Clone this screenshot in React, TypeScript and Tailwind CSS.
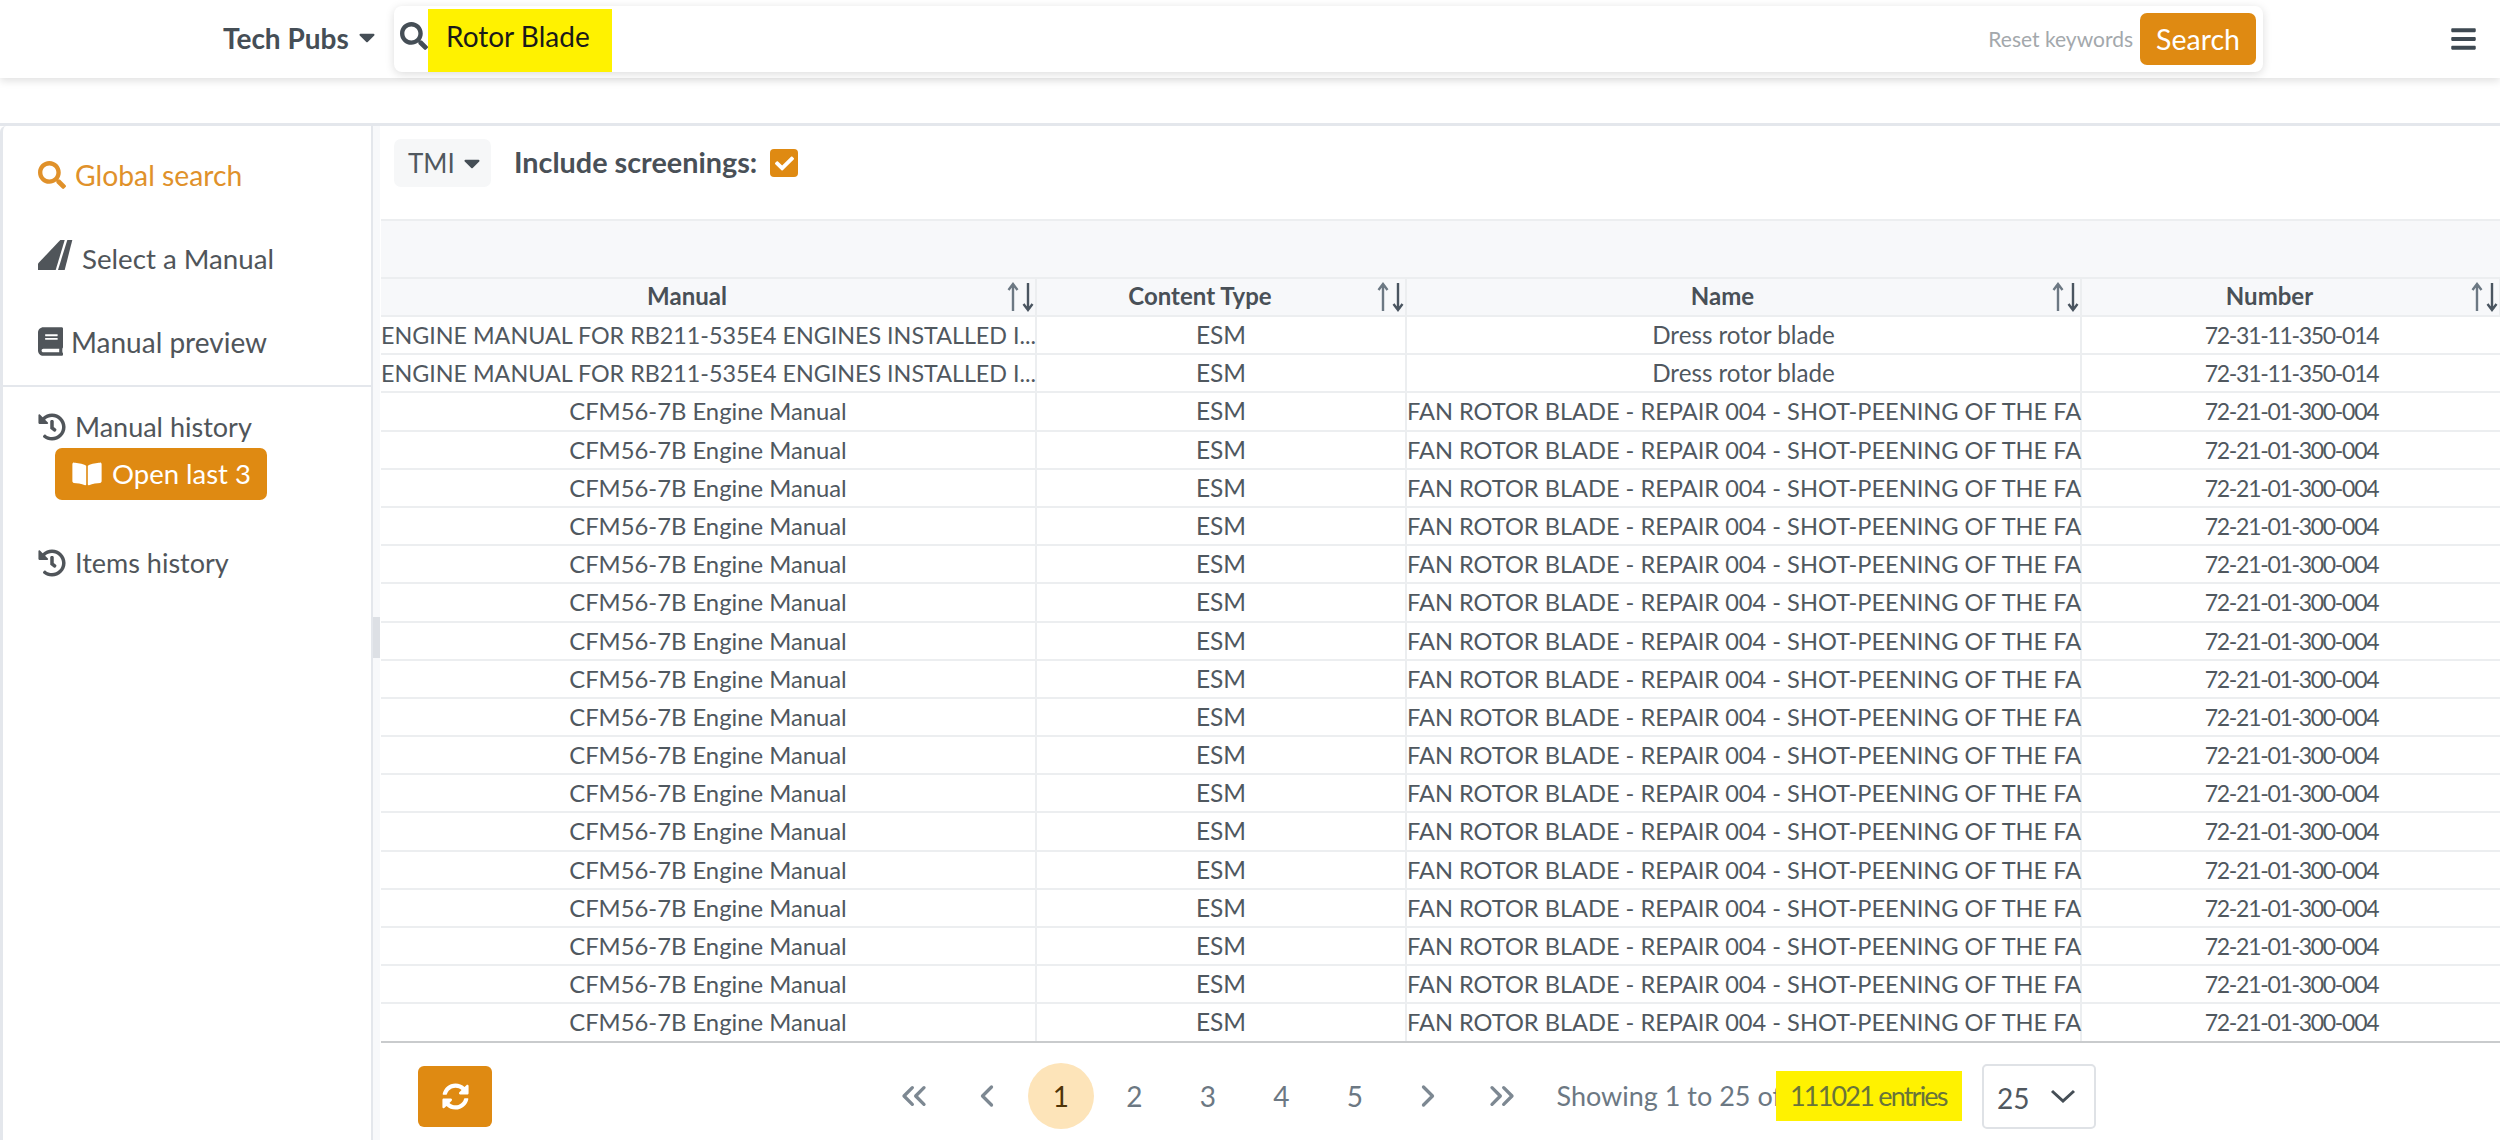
import { FaBars, FaBook, FaBookOpen, FaCaretDown, FaCheck, FaHistory, FaSearch, FaSyncAlt } from 'react-icons/fa';
import { LuChevronLeft, LuChevronRight, LuChevronsLeft, LuChevronsRight } from 'react-icons/lu';

const rows = [
    { manual: 'ENGINE MANUAL FOR RB211-535E4 ENGINES INSTALLED I...', name: 'Dress rotor blade', number: '72-31-11-350-014' },
    { manual: 'ENGINE MANUAL FOR RB211-535E4 ENGINES INSTALLED I...', name: 'Dress rotor blade', number: '72-31-11-350-014' },
    ...Array.from({ length: 17 }, () => ({
        manual: 'CFM56-7B Engine Manual',
        name: 'FAN ROTOR BLADE - REPAIR 004 - SHOT-PEENING OF THE FA',
        number: '72-21-01-300-004',
    })),
];

function SortIcon() {
    return (
        <svg viewBox="0 0 28 30" className="w-[28px] h-[30px]" fill="none" strokeWidth="2.4">
            <path d="M6 29V3M1.500 8 6 2l4.500 6" stroke="#6c7883" />
            <path d="M21 1v26M16.500 22 21 28l4.500-6" stroke="#4a5560" />
        </svg>
    );
}

function HeaderCell({ label, className }: { label: string; className: string }) {
    return (
        <div className={`flex items-center justify-end border-r-2 border-[#eceef0] ${className}`}>
            <span className="flex-1 mt-[-2px] text-center font-bold text-[24px] text-[#495057]">{label}</span>
            <span className="w-[42px] flex justify-end"><SortIcon /></span>
        </div>
    );
}

function SideItem({ icon, label, className }: { icon: React.ReactNode; label: string; className: string }) {
    return (
        <div className={`flex items-center h-[84px] pl-[35px] ${className}`}>
            {icon}
            <span>{label}</span>
        </div>
    );
}

function PageLink({ children, active }: { children: React.ReactNode; active?: boolean }) {
    return (
        <span className="w-[73.500px] flex justify-center items-center text-[28px] text-[#6c7883]">
            {active
                ? <span className="w-[66px] h-[66px] rounded-full bg-[#fde4b9] text-[#4f3408] flex items-center justify-center">{children}</span>
                : children}
        </span>
    );
}

function App() {
    return (
        <div className="w-[2500px] h-[1140px] overflow-hidden bg-white font-['Lato','Liberation_Sans',sans-serif] flex flex-col">
            {/* Top bar */}
            <header className="h-[78px] shrink-0 flex items-center pl-[223px] shadow-[0_3px_8px_rgba(0,0,0,0.12)] relative z-10">
                <div className="flex items-center w-[171px] mt-[-2px] text-[28px] font-bold text-[#454e56]">
                    Tech Pubs
                    <FaCaretDown className="ml-[6px] mt-[-3px] w-[24px] h-[26px]" />
                </div>
                <div className="w-[1869px] h-[66px] flex items-center rounded-[8px] bg-white shadow-[0_2px_10px_rgba(0,0,0,0.14)]">
                    <FaSearch className="ml-[6px] w-[28px] h-[28px] mt-[-6px] text-[#454e56]" />
                    <div className="self-end h-[63px] w-[184px] bg-[#fff200] pl-[18px] pb-[9px] flex items-center text-[28px] text-[#1a1a1a]">Rotor Blade</div>
                    <span className="ml-auto text-[21px] text-[#a3a8ac]">Reset keywords</span>
                    <button className="ml-[7px] mr-[7px] w-[116px] h-[52px] rounded-[7px] bg-[#df8a12] text-white text-[28.500px]">Search</button>
                </div>
                <FaBars className="ml-[188px] w-[25px] h-[28px] text-[#3e4952]" />
            </header>

            <div className="h-[45px] shrink-0" />

            <div className="flex-1 min-h-0 flex border-t-[3px] border-[#e4e7ec]">
                {/* Sidebar */}
                <aside className="w-[373px] shrink-0 border-l-[3px] border-r-2 border-[#e4e7ec] rounded-tl-[6px] pt-[7px]">
                    <SideItem
                        icon={<FaSearch className="w-[28px] h-[28px] mr-[9px]" />}
                        label="Global search"
                        className="text-[28.300px] text-[#e0912a]"
                    />
                    <SideItem
                        icon={
                            <svg viewBox="0 0 35 28" preserveAspectRatio="none" className="w-[35px] h-[30px] mr-[9px] mt-[-8px]" fill="#50555a">
                                <polygon points="0,28 17.700,28 26.700,0 22.300,0 0,22" />
                                <polygon points="20,28 26.700,28 34.300,0 29.300,0" />
                            </svg>
                        }
                        label="Select a Manual"
                        className="text-[27.700px] text-[#50555a]"
                    />
                    <SideItem
                        icon={<FaBook className="w-[25px] h-[29px] mr-[8px]" />}
                        label="Manual preview"
                        className="pb-[3px] text-[28px] text-[#50555a]"
                    />
                    <div className="h-[2px] bg-[#e4e7ec]" />
                    <div className="pl-[35px] pt-[24px] text-[27px] text-[#50555a]">
                        <div className="flex items-center h-[32px]">
                            <FaHistory className="w-[28px] h-[28px] mr-[9px]" />
                            Manual history
                        </div>
                        <button className="mt-[5px] ml-[17px] w-[212px] h-[52px] flex items-center justify-center rounded-[7px] bg-[#df8a12] text-white text-[27.500px]">
                            <FaBookOpen className="w-[32px] h-[26px] mr-[9px]" />
                            Open last 3
                        </button>
                        <div className="flex items-center h-[32px] mt-[47px]">
                            <FaHistory className="w-[28px] h-[28px] mr-[9px]" />
                            Items history
                        </div>
                    </div>
                </aside>

                {/* Resize gutter */}
                <div className="w-[7px] shrink-0 bg-[#f8f9fb] pt-[491px]">
                    <div className="h-[41px] bg-[#dde0e5]" />
                </div>

                <main className="flex-1 min-w-0 flex flex-col">
                    <div className="h-[93px] shrink-0 flex items-start pt-[13px] pl-[14px]">
                        <div className="w-[97px] h-[48px] flex items-center pl-[14px] rounded-[7px] bg-[#f6f7f8] text-[26px] text-[#50585f]">
                            TMI
                            <FaCaretDown className="ml-[5px] w-[24px] h-[26px] text-[#454e56]" />
                        </div>
                        <span className="ml-[23px] h-[48px] flex items-center text-[28.800px] font-bold text-[#495057]">Include screenings:</span>
                        <span className="ml-[13px] mt-[10px] w-[28px] h-[28px] rounded-[4px] bg-[#df8a12] flex items-center justify-center">
                            <FaCheck className="w-[19px] h-[19px] text-white" />
                        </span>
                    </div>

                    {/* Results table */}
                    <div className="w-[2120px] ml-[1px] border-t-2 border-[#eceef0]">
                        <div className="h-[56px] bg-[#f7f8fa]" />
                        <div className="h-[40px] flex bg-[#f7f8fa] border-y-2 border-[#eceef0]">
                            <HeaderCell label="Manual" className="w-[656px]" />
                            <HeaderCell label="Content Type" className="w-[370px]" />
                            <HeaderCell label="Name" className="w-[675px]" />
                            <HeaderCell label="Number" className="w-[419px]" />
                        </div>
                        {rows.map((row, i) => (
                            <div key={i} className="h-[38.200px] flex items-center text-[#50585f] border-b-2 border-[#eceef0] last:border-[#c9cbcd]">
                                <div className={`w-[656px] h-full leading-[36px] text-center whitespace-nowrap border-r-2 border-[#eceef0] ${i < 2 ? 'text-[23.300px]' : 'text-[23.800px]'}`}>{row.manual}</div>
                                <div className="w-[370px] h-full leading-[36px] text-center text-[24.500px] border-r-2 border-[#eceef0]">ESM</div>
                                <div className={`w-[675px] h-full leading-[36px] whitespace-nowrap border-r-2 border-[#eceef0] ${i < 2 ? 'text-center text-[24.200px]' : 'text-[23.600px]'}`}>{row.name}</div>
                                <div className="w-[419px] h-full leading-[36px] text-center text-[23px] tracking-[-1.300px]">{row.number}</div>
                            </div>
                        ))}
                    </div>

                    {/* Pagination */}
                    <div className="flex-1 flex items-center pt-[10px] text-[#6c7883]">
                        <button className="ml-[38px] w-[74px] h-[61px] rounded-[6px] bg-[#df8a12] text-white flex items-center justify-center">
                            <FaSyncAlt className="w-[27px] h-[27px]" />
                        </button>
                        <nav className="ml-[385px] flex">
                            <PageLink><LuChevronsLeft size={40} strokeWidth={2} className="text-[#7d8892]" /></PageLink>
                            <PageLink><LuChevronLeft size={36} strokeWidth={2.200} className="text-[#7d8892]" /></PageLink>
                            <PageLink active>1</PageLink>
                            <PageLink>2</PageLink>
                            <PageLink>3</PageLink>
                            <PageLink>4</PageLink>
                            <PageLink>5</PageLink>
                            <PageLink><LuChevronRight size={36} strokeWidth={2.200} className="text-[#7d8892]" /></PageLink>
                            <PageLink><LuChevronsRight size={40} strokeWidth={2} className="text-[#7d8892]" /></PageLink>
                        </nav>
                        <span className="ml-[18px] text-[27px] whitespace-nowrap">Showing 1 to 25 of</span>
                        <span className="ml-[-6px] pl-[14px] w-[186px] h-[50px] flex items-center bg-[#fff200] text-[27px] tracking-[-1.800px] text-[#69743a] whitespace-nowrap">111021 entries</span>
                        <div className="ml-[20px] w-[114px] h-[65px] flex items-center pl-[13px] rounded-[5px] border-2 border-[#dfe2e6] text-[28px] text-[#50585f]">
                            <span className="mt-[4px]">25</span>
                            <svg viewBox="0 0 26 14" className="ml-[21px] w-[26px] h-[14px]" fill="none" stroke="#454e56" strokeWidth="3">
                                <path d="M2 2l11 10L24 2" />
                            </svg>
                        </div>
                    </div>
                </main>
            </div>
        </div>
    );
}

export default App;
